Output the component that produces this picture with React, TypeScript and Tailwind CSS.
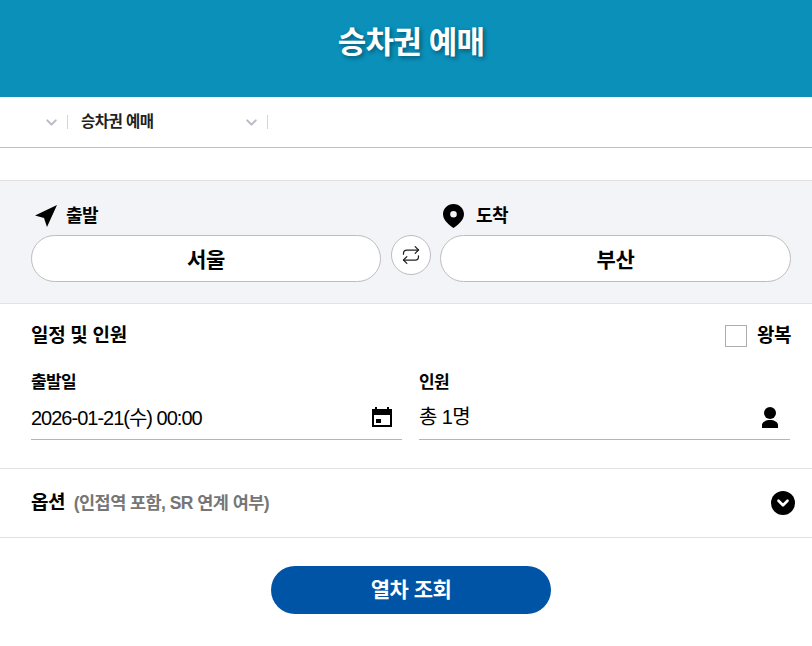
import { ChevronDown, Repeat } from 'lucide-react';

const font = "font-['Liberation_Sans','Noto_Sans_CJK_KR',sans-serif]";

function Crumb({ label, width }: { label: string; width: string }) {
  return (
    <div className={`flex items-center h-[14px] ${width}`}>
      <span className="flex-1 pl-[13px] pt-[1px] text-[15.5px] font-bold tracking-[-0.5px] text-[#222]">{label}</span>
      <ChevronDown size={17} strokeWidth={2.75} className="text-[#b9b9c4] mr-[7px] mt-[1px]" />
      <span className="w-px h-[14px] bg-[#d5d5d5]" />
    </div>
  );
}

function StationField({ name, width }: { name: string; width: string }) {
  return (
    <button className={`${width} shrink-0 h-[47px] rounded-[24px] border border-[#bdbdbd] bg-white pt-[2px] text-[21px] font-bold tracking-[-0.4px] text-black`}>
      {name}
    </button>
  );
}

export default function App() {
  return (
    <div className={`${font} w-[812px] h-[646px] bg-white text-black overflow-hidden`}>
      <header className="h-[97px] bg-[#0a90b9] flex items-center justify-center pb-[10px] pl-[10px]">
        <h1 className="text-[31px] font-bold tracking-[-0.8px] text-white [text-shadow:2px_2px_4px_rgba(0,0,0,0.4)]">
          승차권 예매
        </h1>
      </header>

      <nav className="h-[51px] border-b border-[#bfbfc4] flex items-center pb-[1px]">
        <Crumb label="" width="w-[68px]" />
        <Crumb label="승차권 예매" width="w-[200px]" />
      </nav>

      <div className="h-[33px] border-b border-[#e0e0e4]" />

      <section className="h-[123px] bg-[#f2f4f8] border-b border-[#e2e2e4] pl-[31px] pt-[21px]">
        <div className="flex h-[28px] items-center">
          <div className="flex items-center w-[412px] pl-[4px]">
            <svg width="22" height="22" viewBox="0 0 22 22" fill="#000">
              <path d="M22 0 0 10.500l9 2.500 3 9z" />
            </svg>
            <span className="ml-[9px] text-[18px] font-bold tracking-[-0.6px]">출발</span>
          </div>
          <div className="flex items-center">
            <svg width="21" height="24" viewBox="0 0 21 24" fill="#000">
              <path fillRule="evenodd" d="M10.500 0C4.700 0 0 4.500 0 10.300 0 16.500 7 21.500 10.500 24 14 21.500 21 16.500 21 10.300 21 4.500 16.300 0 10.500 0zm0 7a3.300 3.300 0 1 1 0 6.600 3.300 3.300 0 0 1 0-6.600z" />
            </svg>
            <span className="ml-[12px] text-[18px] font-bold tracking-[-0.6px]">도착</span>
          </div>
        </div>
        <div className="flex items-start mt-[5px]">
          <StationField name="서울" width="w-[350px]" />
          <button className="ml-[10px] mr-[9px] w-[40px] h-[40px] shrink-0 rounded-full border border-[#bdbdbd] bg-white flex items-center justify-center">
            <Repeat size={20} strokeWidth={1.5} className="text-[#222]" />
          </button>
          <StationField name="부산" width="w-[351px]" />
        </div>
      </section>

      <section className="h-[165px] border-b border-[#e2e2e4] pl-[31px] pt-[19px]">
        <div className="flex items-center justify-between w-[760px] h-[26px]">
          <h2 className="text-[19px] font-bold tracking-[-0.3px]">일정 및 인원</h2>
          <label className="flex items-center">
            <span className="w-[22px] h-[22px] border border-[#adadad] bg-white" />
            <span className="ml-[10px] text-[19px] font-bold tracking-[-0.5px]">왕복</span>
          </label>
        </div>
        <div className="flex gap-[17px] w-[759px] mt-[22px]">
          <div className="flex-1">
            <div className="text-[17px] font-bold tracking-[-0.6px] h-[24px] leading-[24px]">출발일</div>
            <div className="flex items-center justify-between h-[45px] border-b border-[#b5b5b5] pr-[10px]">
              <span className="pt-[1px] text-[20px] tracking-[-1px]">2026-01-21(수) 00:00</span>
              <svg width="20" height="20" viewBox="0 0 20 20" fill="#000">
                <path fillRule="evenodd" d="M3 0h2v2h10V0h2v2h3v18H0V2h3zM2 8v10h16V8zm2 4h5v4H4z" />
              </svg>
            </div>
          </div>
          <div className="flex-1">
            <div className="text-[17px] font-bold tracking-[-0.6px] h-[24px] leading-[24px]">인원</div>
            <div className="flex items-center justify-between h-[45px] border-b border-[#b5b5b5] pr-[12px]">
              <span className="text-[20px] tracking-[-0.6px]">총 1명</span>
              <svg width="16" height="21" viewBox="0 0 16 21" fill="#000">
                <circle cx="8" cy="6" r="6" />
                <path d="M0 21v-3c0-3 4-5 8-5s8 2 8 5v3z" />
              </svg>
            </div>
          </div>
        </div>
      </section>

      <section className="h-[69px] border-b border-[#e2e2e4] pl-[31px] pr-[17px] flex items-center justify-between">
        <div className="flex items-baseline">
          <span className="text-[19px] font-bold tracking-[-0.6px]">옵션</span>
          <span className="ml-[9px] text-[17.5px] font-bold tracking-[-0.55px] text-[#767676]">(인접역 포함, SR 연계 여부)</span>
        </div>
        <span className="w-[24px] h-[24px] rounded-full bg-black flex items-center justify-center">
          <ChevronDown size={18} strokeWidth={3.5} className="text-white" />
        </span>
      </section>

      <div className="flex justify-center pt-[28px] pl-[10px]">
        <button className="w-[280px] h-[48px] rounded-[24px] bg-[#0054a6] text-white text-[21px] font-bold tracking-[-0.5px]">
          열차 조회
        </button>
      </div>
    </div>
  );
}
